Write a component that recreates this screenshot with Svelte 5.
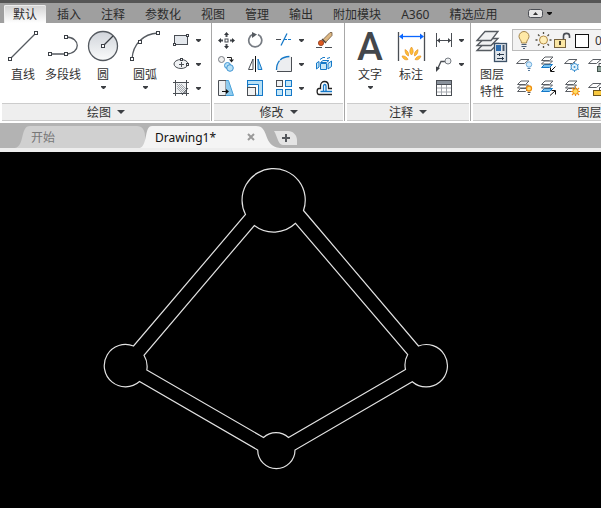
<script>
  const menus = ['默认', '插入', '注释', '参数化', '视图', '管理', '输出', '附加模块', 'A360', '精选应用'];

  const drawTools = [
    { icon: 'line', label: '直线' },
    { icon: 'polyline', label: '多段线' },
    { icon: 'circle', label: '圆', more: true },
    { icon: 'arc', label: '圆弧', more: true }
  ];
  const drawSmall = [
    { icon: 'rect', label: '矩形' },
    { icon: 'ellipse', label: '椭圆' },
    { icon: 'hatch', label: '图案填充' }
  ];
  const modifyTools = [
    [{ icon: 'move', label: '移动' }, { icon: 'rotate', label: '旋转' }, { icon: 'trim', label: '修剪', more: true }, { icon: 'erase', label: '删除' }],
    [{ icon: 'copy', label: '复制' }, { icon: 'mirror', label: '镜像' }, { icon: 'fillet', label: '圆角', more: true }, { icon: 'explode', label: '分解' }],
    [{ icon: 'stretch', label: '拉伸' }, { icon: 'scale', label: '缩放' }, { icon: 'array', label: '阵列', more: true }, { icon: 'offset', label: '偏移' }]
  ];
  const noteSmall = [
    { icon: 'linear', label: '线性', more: true },
    { icon: 'leader', label: '引线', more: true },
    { icon: 'table', label: '表格' }
  ];
  const layerTools = [
    [
      { icon: 'layerOff', label: '关' },
      { icon: 'layerIso', label: '隔离' },
      { icon: 'layerFreeze', label: '冻结' },
      { icon: 'layerLock', label: '锁定' }
    ],
    [
      { icon: 'layerOn', label: '打开所有图层' },
      { icon: 'layerUniso', label: '取消隔离' },
      { icon: 'layerThaw', label: '解冻所有图层' },
      { icon: 'layerUnlock', label: '解锁' }
    ]
  ];

  let activeMenu = $state('默认');
</script>

{#snippet node(x, y)}
  <rect x={x - 1.5} y={y - 1.5} width="3" height="3" fill="#fff" stroke="#3c4046" stroke-width="1" />
{/snippet}

{#snippet dot(x, y)}
  <rect x={x - 1} y={y - 1} width="2" height="2" fill="#fff" stroke="#3c4046" stroke-width="1" />
{/snippet}

{#snippet arrow(big)}
  <svg class="arrow" width={big ? 8 : 5} height={big ? 4 : 3} viewBox={big ? '0 0 8 4' : '0 0 5 3'} aria-hidden="true">
    <path d={big ? 'M0 0H8L4 4Z' : 'M0 0H5V1L3 3H2L0 1Z'} fill="#3c3f43" />
  </svg>
{/snippet}

{#snippet sheets(blue)}
  <path d="M1.5 11.5L4.500 8.500H12.500L9.500 11.500Z" fill={blue ? '#7cc2ee' : '#fff'} stroke={blue ? '#1478c8' : '#5a5e64'} />
  <path d="M1.500 8L4.500 5H12.500L9.500 8Z" fill="#fff" stroke="#5a5e64" />
  <path d="M1.500 4.500L5 1H13L9.500 4.500Z" fill="#fff" stroke="#5a5e64" />
{/snippet}

{#snippet bigIcon(name)}
  <svg width="32" height="32" viewBox="0 0 32 32" fill="none" stroke="#555a60" stroke-width="1.300" aria-hidden="true">
    {#if name === 'line'}
      <path d="M3 29L29 3" />
      {@render node(3, 29)}{@render node(29, 3)}
    {:else if name === 'polyline'}
      <path d="M3 24H19C34 24 34 7 19 7" />
      {@render node(3, 24)}{@render node(19, 24)}{@render node(19, 7)}
    {:else if name === 'circle'}
      <circle cx="16" cy="16" r="14.500" fill="url(#disc)" />
      <path d="M16 16L26 6" stroke="#3c4046" />
      {@render node(16, 16)}
    {:else if name === 'arc'}
      <path d="M3 29C4 14 14 4 29 3" />
      {@render node(3, 29)}{@render node(11, 12)}{@render node(29, 3)}
    {:else if name === 'dim'}
      <path d="M3.500 2V31M29.500 2V31" stroke="#4a4e54" />
      <path d="M6 6.500H27" stroke="#0a66ff" />
      <path d="M4 6.500L8 3.500V9.500ZM29 6.500L25 3.500V9.500Z" fill="#0a66ff" stroke="none" />
      <g fill="#ffbd35" stroke="#e08a1c" stroke-width="0.600">
        <path d="M16.500 17C18.500 20 19 22.500 16.500 25C14 22.500 14.500 20 16.500 17Z" />
        <path d="M10 19.500C13 21 14 23 13.500 26C11 25 10 23 10 19.500ZM23 19.500C20 21 19 23 19.500 26C22 25 23 23 23 19.500Z" />
        <path d="M7 26C9.500 25.500 12 27 13 29.500C10 30.500 8 29 7 26ZM26 26C23.500 25.500 21 27 20 29.500C23 30.500 25 29 26 26Z" />
      </g>
    {:else if name === 'layers'}
      <g fill="#f1f2f3" stroke="#565b61">
        <path d="M1 20.500L8 13.500H22L15 20.500Z" />
        <path d="M1 15.500L8 8.500H22L15 15.500Z" />
        <path d="M1 10.500L9 1.500H22L15 10.500Z" />
      </g>
      <rect x="18.500" y="13.500" width="12" height="18" fill="#e1e7ed" stroke="#3d5268" />
      <rect x="20" y="15" width="5" height="6" fill="#2d6db0" stroke="none" />
      <path d="M27.500 15V21" stroke="#47566a" stroke-width="2" />
      <path d="M21 24.500H28M21 28.500H28" stroke="#2b3b4d" stroke-width="1" />
      <path d="M23.500 23V26M26.500 27V30" stroke="#2b3b4d" stroke-width="1" />
    {/if}
  </svg>
{/snippet}

{#snippet icon(name)}
  <svg width="16" height="16" viewBox="0 0 16 16" fill="none" stroke="#4a4e54" aria-hidden="true">
    {#if name === 'rect'}
      <rect x="1.500" y="3.500" width="13" height="9" fill="#e4e8ed" />
      {@render dot(1.5, 12.5)}{@render dot(14.5, 3.5)}
    {:else if name === 'ellipse'}
      <ellipse cx="8" cy="8" rx="7" ry="4.500" fill="#f0f2f4" />
      <path d="M6 8.500H11M8.500 6V11" />
      {@render dot(8.5, 3.5)}{@render dot(14.5, 8.5)}
    {:else if name === 'hatch'}
      <rect x="3" y="3" width="10" height="10" fill="#eef0f2" stroke="none" />
      <path d="M4 4L13 13M4 8L9 13M8 4L13 9M4 6L11 13M6 4L13 11" stroke="#868b92" stroke-width="0.700" />
      <path d="M2.500 0V16M13.500 0V16M0 2.500H16M0 13.500H16" />
      <path d="M9 15L15 8" />
    {:else if name === 'move'}
      <path d="M8.500 2V5M8.500 12V15M2 8.500H5M12 8.500H15" stroke-width="2" />
      <path d="M8.500 0L11 3H6ZM8.500 17L11 14H6ZM0 8.500L3 6V11ZM17 8.500L14 6V11Z" fill="#34383d" stroke="none" />
      <rect x="7" y="7" width="3" height="3" fill="#fff" />
    {:else if name === 'rotate'}
      <path d="M6 2.300A6.500 6.500 0 1 0 11 2.500" stroke="#777c83" stroke-width="1.700" />
      <path d="M5 0L10 2.500L5 6Z" fill="#555a60" stroke="none" />
    {:else if name === 'trim'}
      <path d="M0 7.500H5" />
      <path d="M5 13.500L11 1.500" stroke="#1478c8" stroke-width="1.300" />
      <path d="M8 7.500H16" stroke="#1478c8" stroke-dasharray="3 1" />
    {:else if name === 'erase'}
      <path d="M0 15.500H6M9 15.500H16" />
      <path d="M6.500 8L14 .5H16V3.500L9.500 10.500Z" fill="#ddb782" stroke="#6d5740" stroke-width="0.800" />
      <path d="M6 7L10 11" stroke="#4a4038" stroke-width="1.500" />
      <circle cx="5" cy="11" r="2.600" fill="#e05a20" stroke="#8c3a1a" stroke-width="0.800" />
    {:else if name === 'copy'}
      <circle cx="3.500" cy="3.500" r="3" fill="#eee" stroke="#777c83" />
      <path d="M9 1.500H13.500V4" stroke="#222" /><path d="M11 3.500H16L13.500 6.500Z" fill="#222" stroke="none" />
      <g fill="#b8e0f5" stroke="#4095d4"><circle cx="9.500" cy="9.500" r="3" /><circle cx="12" cy="12" r="3.300" /></g>
    {:else if name === 'mirror'}
      <path d="M6 3V13.500H1.500Z" fill="#fff" />
      <path d="M11 3V13.500H15Z" fill="#a9d8f2" stroke="#1478c8" />
      <path d="M8.500 0V16" stroke="#111" />
    {:else if name === 'fillet'}
      <path d="M1 15.500V12C1.500 5 6 1 13 .5H15.500V15.500Z" fill="#eceef0" stroke="none" />
      <path d="M15.500 1V15.500H1" />
      <path d="M.5 14C.5 6 5 .5 14 .5" stroke="#1478c8" stroke-width="1.300" stroke-dasharray="10 1" />
    {:else if name === 'explode'}
      <g fill="#c5e6f7" stroke="#1478c8">
        <path d="M4.500 6.500L7 4.500H13L10.500 6.500Z" fill="#eaf6fc" />
        <path d="M4.500 7.500H10.500V13.500H4.500Z" />
        <path d="M12 7.500L15.500 5V10.500L12 13Z" />
        <path d="M.5 7L3 5.500V11L.5 13Z" />
        <path d="M4 3.500L7 1.500H9M11 2.500L14 1.500" fill="none" />
      </g>
    {:else if name === 'stretch'}
      <path d="M.5 .5H8V15.500H.5Z" fill="#edf0f2" />
      <path d="M8 .5H10.500L15.500 15.500H8" fill="#8fcbee" stroke="#4ba3da" />
      <path d="M4 11.500H9" stroke="#111" /><path d="M8 9L11 11.500L8 14Z" fill="#111" stroke="none" />
    {:else if name === 'scale'}
      <rect x=".5" y=".5" width="15" height="15" fill="#b8e0f5" stroke="#1478c8" />
      <path d="M1 4.500H11.500V15" stroke="#1478c8" fill="#fff" />
      <rect x=".5" y="7.500" width="8" height="8" fill="#f1f2f3" />
    {:else if name === 'array'}
      <g fill="#c5e6f7" stroke="#1478c8">
        <rect x="9.500" y=".5" width="6" height="6" /><rect x=".5" y="9.500" width="6" height="6" /><rect x="9.500" y="9.500" width="6" height="6" />
      </g>
      <rect x=".5" y=".5" width="6" height="6" fill="#f1f2f3" />
    {:else if name === 'offset'}
      <path d="M16 14.500H3C.5 14.500 .5 8.500 3 8.500H4.500V6C4.500 0 12.500 0 12.500 6V8.500H16" stroke="#222" stroke-width="1.300" />
      <path d="M16 11.500H4.500M7.500 11V6C7.500 4 10 4 10 6V11" stroke="#1478c8" stroke-width="1.300" />
    {:else if name === 'linear'}
      <path d="M.5 1V15M15.500 1V15M1 8.500H15" />
      <path d="M1 8.500L4 6V11ZM15 8.500L12 6V11Z" fill="#3f4348" stroke="none" />
    {:else if name === 'leader'}
      <path d="M1.500 13L5 5.500H9" stroke-width="1.300" />
      <path d="M0 16V10.500L4 12Z" fill="#3f4348" stroke="none" />
      <circle cx="12" cy="5" r="3" fill="#eef0f2" stroke="#777c83" />
    {:else if name === 'table'}
      <rect x=".5" y=".5" width="15" height="15" fill="#fff" />
      <path d="M1 1H15V4H1Z" fill="#8a929c" stroke="none" />
      <path d="M1 8H15M1 12H15M5.500 4V15M10.500 4V15" stroke="#a3a7ad" />
      <path d="M1 4.500H15" />
    {:else if name === 'layerIso' || name === 'layerUniso'}
      {@render sheets(true)}
      {#if name === 'layerIso'}
        <path d="M15.500 10.500L11 15M10.500 11.500V15.500H14.500" stroke="#111" />
      {:else}
        <path d="M10 15.500L15 11M11.500 10.500H15.500V14.500" stroke="#111" />
      {/if}
    {:else if name === 'layerOn' || name === 'layerThaw'}
      {@render sheets(false)}
      {#if name === 'layerOn'}
        <circle cx="13" cy="8.500" r="2.500" fill="#ffe178" stroke="#ee9010" stroke-width="1.300" />
        <path d="M11.500 12.500H14.500M12 14.500H14" stroke="#555" />
      {:else}
        <path d="M11.500 6.500V16M7 11.500H16M8 8L15 15M15 8L8 15" stroke="#ef8b13" stroke-width="1.200" />
        <circle cx="11.500" cy="11.500" r="2.700" fill="#ffdf63" stroke="#ef8b13" />
      {/if}
    {:else}
      <path d="M.5 7.500L5 3.500H13L8.500 7.500Z" fill="#fff" stroke="#5a5e64" />
      {#if name === 'layerOff'}
        <circle cx="13" cy="8.500" r="2.700" fill="#d8edfb" stroke="#6aabdc" />
        <path d="M11.500 12.500H14.500M12 14.500H14" stroke="#56799c" />
      {:else if name === 'layerFreeze'}
        <circle cx="10.500" cy="11" r="3.500" fill="#e1f3fc" stroke="#3f92d1" />
        <path d="M10.500 6V8M10.500 14V16M6 8.500L8 9.500M13 12.500L15 13.500M15 8.500L13 9.500M6 13.500L8 12.500" stroke="#3f92d1" />
        <circle cx="10.500" cy="11" r="1" fill="#3f92d1" stroke="none" />
      {:else if name === 'layerLock'}
        <rect x="9.500" y="10.500" width="7" height="5" fill="#8fa39a" stroke="#42534c" /><path d="M11 10V7.500H15V10" />
      {:else}
        <rect x="5.500" y="10.500" width="8" height="5" fill="#f8c83e" stroke="#6e551a" /><path d="M11.500 10V7.500H15V9.500" />
      {/if}
    {/if}
  </svg>
{/snippet}

{#snippet bigTool(name, label, more)}
  <button class="big">
    {#if name === 'text'}<span class="letter" aria-hidden="true">A</span>{:else}{@render bigIcon(name)}{/if}
    <span class="label">{label}</span>
    {#if more}{@render arrow(false)}{/if}
  </button>
{/snippet}

{#snippet tool(name, label)}
  <button class="tool" aria-label={label}>{@render icon(name)}</button>
{/snippet}

{#snippet dropdown(label)}
  <button class="more" aria-label={label}>{@render arrow(false)}</button>
{/snippet}

{#snippet title(label)}
  <button class="title">{label}{@render arrow(true)}</button>
{/snippet}

<svg class="defs" width="0" height="0" aria-hidden="true">
  <linearGradient id="disc" x1="0" y1="0" x2="0" y2="1">
    <stop offset="0" stop-color="#d0d4da" /><stop offset="1" stop-color="#fafbfb" />
  </linearGradient>
</svg>

<div class="app">
  <nav class="menus">
    {#each menus as menu}
      <button class="menu" class:active={menu === activeMenu} onclick={() => (activeMenu = menu)}>{menu}</button>
    {/each}
    <button class="collapse" aria-label="最小化功能区">
      <svg width="24" height="9" viewBox="0 0 24 9" aria-hidden="true">
        <rect x=".5" y=".5" width="14" height="8" rx="2" fill="#e6e6e6" stroke="#4c4f55" />
        <path d="M5 6L7.500 3L10 6Z" fill="#333" /><path d="M19 3H24V4L22 6H21L19 4Z" fill="#111" />
      </svg>
    </button>
  </nav>

  <div class="ribbon">
    <section class="panel">
      <div class="body draw">
        {#each drawTools as t}{@render bigTool(t.icon, t.label, t.more)}{/each}
        <div class="smalls">
          {#each drawSmall as t}
            {@render tool(t.icon, t.label)}{@render dropdown(t.label + '选项')}
          {/each}
        </div>
      </div>
      {@render title('绘图')}
    </section>

    <section class="panel">
      <div class="body modify">
        {#each modifyTools as row}
          {#each row as t}
            {@render tool(t.icon, t.label)}
            {#if t.more}{@render dropdown(t.label + '选项')}{/if}
          {/each}
        {/each}
      </div>
      {@render title('修改')}
    </section>

    <section class="panel">
      <div class="body note">
        {@render bigTool('text', '文字', true)}
        {@render bigTool('dim', '标注', false)}
        <div class="smalls">
          {#each noteSmall as t}
            {@render tool(t.icon, t.label)}
            {#if t.more}{@render dropdown(t.label + '选项')}{/if}
          {/each}
        </div>
      </div>
      {@render title('注释')}
    </section>

    <section class="panel layers">
      <div class="body">
        {@render bigTool('layers', '图层特性', false)}
        <div class="layer-tools">
          <button class="combo">
            <svg width="80" height="20" viewBox="0 0 80 20" fill="none" aria-hidden="true">
              <path d="M8.500 13C8.500 10 6 9 6 6.500A5 5 0 0 1 16 6.500C16 9 13.500 10 13.500 13Z" fill="#ffe9a6" stroke="#a4854b" />
              <path d="M8.500 14.500H13.500M8.500 16.500H13.500M10 18.500H12" stroke="#4d6076" />
              <path d="M30.500 2V4M30.500 16V18M22.500 10H24.500M36.500 10H38.500M25 4.500L26.500 6M34.500 14L36 15.500M36 4.500L34.500 6M26.500 14L25 15.500" stroke="#555044" stroke-width="1.300" />
              <circle cx="30.500" cy="10" r="4" fill="#ffefb8" stroke="#b28b48" />
              <path d="M50.500 10V6C50.500 2.500 56.500 2.500 56.500 6V8" stroke="#4a4e54" stroke-width="1.600" />
              <rect x="41.500" y="9.500" width="11" height="8" fill="#fbe7a4" stroke="#76623d" />
              <path d="M47 11V15" stroke="#4b432d" stroke-width="2" />
              <rect x="62.500" y="4.500" width="13" height="13" fill="#fff" stroke="#111" />
            </svg>
            <span>0</span>
          </button>
          {#each layerTools as row}
            <div class="row">
              {#each row as t}{@render tool(t.icon, t.label)}{/each}
            </div>
          {/each}
        </div>
      </div>
      {@render title('图层')}
    </section>
  </div>

  <div class="files">
    <button class="file start">
      <svg class="shape" viewBox="0 0 130 22" preserveAspectRatio="none" aria-hidden="true">
        <path d="M0 22C10 20 5 0 15 0H122C127 0 130 4 130 10V22Z" fill="#d0d0d0" />
      </svg>
      <span>开始</span>
    </button>
    <div class="file current">
      <svg class="shape" viewBox="0 0 140 22" preserveAspectRatio="none" aria-hidden="true">
        <path d="M0 22C8 19 4 0 12 0H116C130 0 122 20 140 22Z" fill="#f4f4f4" />
      </svg>
      <span>Drawing1*</span>
      <button class="close" aria-label="关闭">
        <svg width="8" height="8" viewBox="0 0 8 8"><path d="M1 1L7 7M7 1L1 7" stroke="#9a9a9a" stroke-width="2" /></svg>
      </button>
    </div>
    <button class="add" aria-label="新图形">
      <svg width="24" height="16" viewBox="0 0 24 16">
        <path d="M0 1H14C19 1 23 5 23 10V15H9C4 15 3 5 0 1Z" fill="#e4e4e4" />
        <path d="M12 4V12M8 8H16" stroke="#55585c" stroke-width="2" />
      </svg>
    </button>
  </div>

  <main>
    <svg class="drawing" viewBox="0 152 601 356" fill="none" stroke="#e2e2e2" stroke-width="1.200" role="img" aria-label="Drawing1">
      <path d="M245.500 214.500A31.600 31.600 0 1 1 303.500 210.500L418.500 346A21.200 21.200 0 1 1 412.300 381.700L295 450A18.600 18.600 0 1 1 257.700 450L139.500 381.500A21.200 21.200 0 1 1 133.500 346Z" />
      <path d="M254.300 225.500A31.600 31.600 0 0 0 295.500 223.300L407.700 354.500A21.200 21.200 0 0 0 405.500 369.500L288.500 437.500A18.600 18.600 0 0 0 263.500 437.500L146.800 370A21.200 21.200 0 0 0 144 355.300Z" />
    </svg>
  </main>
</div>

<style>
  :global(body) {
    margin: 0;
    background: #000;
  }

  .app {
    font: 12px/17px 'Noto Sans', 'Noto Sans CJK SC', sans-serif;
    color: #333;
    overflow: hidden;
  }

  button {
    margin: 0;
    padding: 0;
    border: 0;
    background: none;
    color: inherit;
    font: inherit;
    white-space: nowrap;
  }

  svg {
    display: block;
    flex: none;
    overflow: visible;
  }

  .defs {
    position: absolute;
  }

  .menus {
    display: flex;
    align-items: flex-end;
    height: 20px;
    padding-left: 4px;
    border-top: 3px solid #555;
    background: #9f9f9f;
  }

  .menu {
    height: 18px;
    padding: 0 10px;
    color: #2c2c2c;
  }

  .menu.active {
    padding: 0 9px;
    margin-right: 1px;
    border-radius: 2px 2px 0 0;
    background: linear-gradient(#d2d2d2, #fff);
    box-shadow: inset 0 1px #eee, inset 1px 0 #eee;
  }

  .collapse {
    margin: 0 0 5px 21px;
  }

  .ribbon {
    display: flex;
    background: #fff;
    padding-bottom: 2px;
    overflow: hidden;
  }

  .panel {
    flex: none;
    border-right: 1px solid #a8a8a8;
  }

  .body {
    display: flex;
    box-sizing: border-box;
    height: 80px;
    padding-top: 5px;
  }

  .title {
    display: flex;
    align-items: center;
    justify-content: center;
    gap: 6px;
    box-sizing: border-box;
    width: calc(100% - 3px);
    height: 18px;
    margin: 0 1px 0 2px;
    border-top: 1px solid #ccc;
    border-bottom: 1px solid #ccc;
    background: #eee;
  }

  .big {
    display: flex;
    flex-direction: column;
    align-items: center;
    width: 40px;
    padding-top: 2px;
  }

  .label {
    margin: 4px 0 3px;
  }

  .letter {
    height: 32px;
    font: 500 39px/34px Roboto, sans-serif;
    color: #43474c;
  }

  .smalls {
    display: grid;
    grid-template-columns: 24px 10px;
    grid-template-rows: repeat(3, 24px);
  }

  .tool,
  .more {
    display: flex;
    align-items: center;
    justify-content: center;
    height: 24px;
  }

  .draw {
    padding-left: 3px;
    padding-right: 8px;
  }

  .draw .big:nth-child(4) {
    width: 44px;
  }

  .draw .smalls {
    margin-left: 2px;
  }

  .modify {
    display: grid;
    grid-template-columns: 28px 30px 28px 6px 40px;
    grid-template-rows: repeat(3, 24px);
  }

  .note {
    padding-left: 5px;
    padding-right: 4px;
  }

  .note .big:nth-child(2) {
    width: 42px;
  }

  .layers {
    width: 250px;
  }

  .layers .big {
    margin-left: 1px;
  }

  .layers .label {
    width: 24px;
    white-space: normal;
  }

  .layer-tools {
    flex: 1;
  }

  .combo {
    display: flex;
    align-items: center;
    gap: 2px;
    box-sizing: border-box;
    width: 100%;
    height: 22px;
    margin: 1px 0;
    border: 1px solid #bbb;
    background: #f3f3f3;
  }

  .row {
    display: flex;
  }

  .row .tool {
    width: 24px;
  }

  .files {
    display: flex;
    align-items: flex-end;
    height: 25px;
    padding-left: 15px;
    border-bottom: 4px solid #ededed;
    background: #b3b3b3;
  }

  .file {
    position: relative;
    display: flex;
    align-items: center;
    box-sizing: border-box;
    height: 22px;
  }

  .file span {
    position: relative;
  }

  .shape {
    position: absolute;
    inset: 0;
    width: 100%;
    height: 100%;
  }

  .start {
    width: 130px;
    padding-left: 16px;
    color: #777;
  }

  .current {
    justify-content: space-between;
    width: 140px;
    margin-left: -5px;
    padding: 0 25px 0 15px;
    color: #111;
  }

  .close {
    position: relative;
  }

  .add {
    margin: 0 0 2px -6px;
  }

  main {
    background: #000;
  }

  .drawing {
    width: 100%;
    height: auto;
  }
</style>
